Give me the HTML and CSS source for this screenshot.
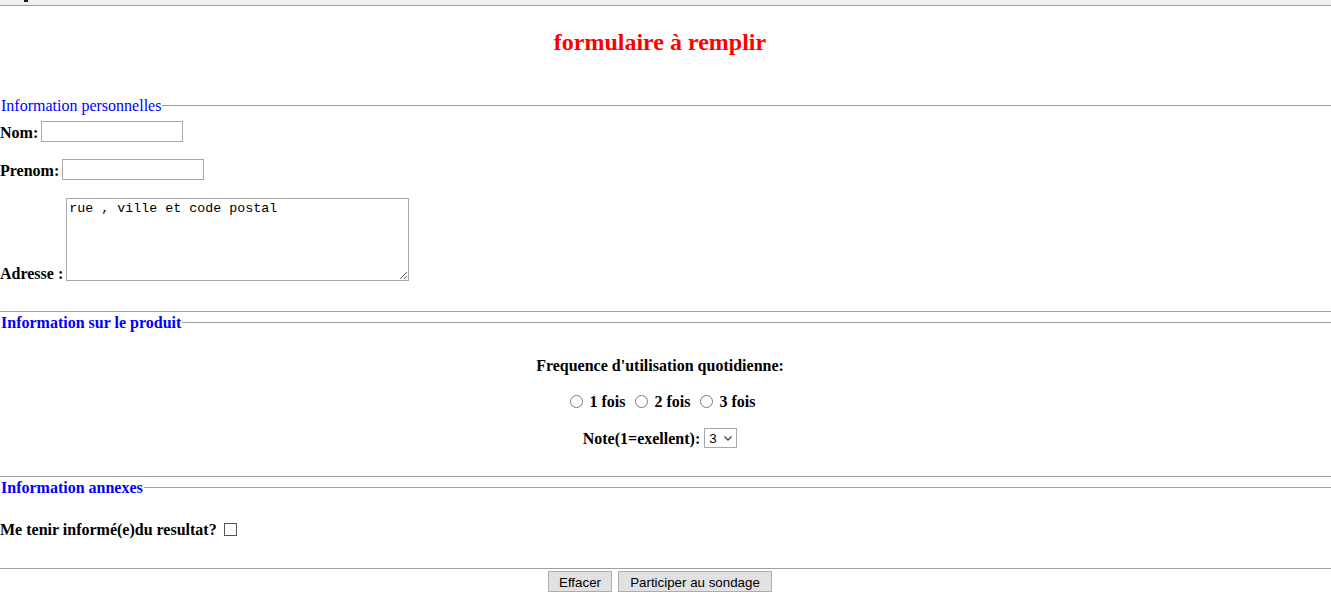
FILE: index.html
```html
<!DOCTYPE html>
<html lang="fr">
<head>
<meta charset="utf-8">
<title>formulaire</title>
<link rel="stylesheet" href="styles.css">
</head>
<body>
<div class="topbar"><span class="mark"></span></div>
<h2 class="title">formulaire à remplir</h2>
<form class="form">
  <fieldset class="sec sec1">
    <legend class="leg">Information personnelles</legend>
    <div class="row r-nom">
      <label class="lbl" for="nom">Nom:</label>
      <input class="txt" type="text" id="nom">
    </div>
    <div class="row r-prenom">
      <label class="lbl" for="prenom">Prenom:</label>
      <input class="txt" type="text" id="prenom">
    </div>
    <div class="row r-adr">
      <label class="lbl lbl-adr" for="adr">Adresse :</label>
      <textarea class="area" id="adr">rue , ville et code postal</textarea>
    </div>
  </fieldset>

  <fieldset class="sec sec2">
    <legend class="leg leg-b">Information sur le produit</legend>
    <div class="line ctr freq">Frequence d'utilisation quotidienne:</div>
    <div class="line ctr radios">
      <input class="radio" type="radio" name="f" id="f1"><label class="rlbl" for="f1">1 fois</label>
      <input class="radio" type="radio" name="f" id="f2"><label class="rlbl" for="f2">2 fois</label>
      <input class="radio" type="radio" name="f" id="f3"><label class="rlbl last" for="f3">3 fois</label>
    </div>
    <div class="line ctr note">
      <label class="lbl" for="note">Note(1=exellent):</label>
      <span class="selwrap">
        <select class="sel" id="note">
          <option>1</option><option>2</option><option selected>3</option><option>4</option><option>5</option>
        </select>
        <svg class="chev" width="8" height="5" viewBox="0 0 8 5"><path d="M0.5 0.5 L4 4 L7.5 0.5" fill="none" stroke="#444" stroke-width="1.3"/></svg>
      </span>
    </div>
  </fieldset>

  <fieldset class="sec sec3">
    <legend class="leg leg-b">Information annexes</legend>
    <div class="line chkrow">
      <label class="lbl" for="inf">Me tenir informé(e)du resultat?</label>
      <input class="chk" type="checkbox" id="inf">
    </div>
  </fieldset>

  <div class="ctr buttons">
    <button class="btn btn-reset" type="reset">Effacer</button>
    <button class="btn btn-submit" type="submit">Participer au sondage</button>
  </div>
</form>
</body>
</html>
```

FILE: styles.css
```css
* { box-sizing: border-box; }

body {
  margin: 0;
  font-family: "Liberation Serif", "Times New Roman", serif;
  font-size: 16px;
  color: #000;
  background: #fff;
}

.topbar {
  height: 6px;
  background: #f0f0f0;
  border-bottom: 1px solid #a0a0a0;
}
.topbar .mark {
  display: block;
  width: 4px;
  height: 2px;
  margin-left: 24px;
  background: #1a1a1a;
}

.title {
  margin: 22px 0 0;
  padding-right: 11px;
  font-size: 24px;
  line-height: 28px;
  font-weight: bold;
  color: #f00;
  text-align: center;
}

.form { margin: 0; }

.sec {
  margin: 0;
  padding: 0;
  min-width: 0;
  border: 0;
  border-top: 1px solid #a0a0a0;
  border-bottom: 1px solid #a0a0a0;
}
.sec1 { margin-top: 40px; padding-bottom: 30px; }
.sec2 { margin-top: 1px; padding-bottom: 28px; }
.sec3 { margin-top: 1px; padding-bottom: 29px; }

.leg {
  padding: 2px 1px 0;
  margin: 0;
  line-height: 16px;
  color: #00f;
}
.leg-b { font-weight: bold; }

.lbl {
  font-weight: bold;
  line-height: 18px;
  padding-top: 2px;
  white-space: nowrap;
}
.lbl-adr { margin-bottom: -2px; }

.row {
  display: flex;
  align-items: center;
  gap: 3px;
}
.r-nom { margin-top: 7px; }
.r-prenom { margin-top: 17px; }
.r-adr { margin-top: 18px; align-items: flex-end; }

.txt {
  width: 142px;
  height: 21px;
  margin: 0;
  padding: 1px 2px;
  border: 1px solid #a9a9a9;
  font-family: "Liberation Sans", Arial, sans-serif;
  font-size: 13px;
  background: #fff;
}

.area {
  width: 343px;
  height: 83px;
  margin: 0;
  padding: 2px;
  border: 1px solid #a9a9a9;
  font-family: "Liberation Mono", "Courier New", monospace;
  font-size: 13.33px;
  line-height: 16px;
  color: #000;
  background: #fff;
  resize: both;
}

.line {
  height: 20px;
  line-height: 20px;
}
.ctr {
  display: flex;
  justify-content: center;
  align-items: center;
  padding-right: 11px;
}
.freq { margin-top: 24px; padding-top: 1px; align-items: flex-start; font-weight: bold; }
.radios { margin-top: 16px; }
.note { margin-top: 17px; gap: 4px; }

.radio {
  appearance: none;
  -webkit-appearance: none;
  width: 13px;
  height: 13px;
  margin: 0 7px 0 5px;
  border: 1px solid #7a7a7a;
  border-radius: 50%;
  background: #fff;
  flex: none;
}
.rlbl {
  font-weight: bold;
  margin-right: 4px;
  line-height: 18px;
  padding-top: 2px;
  white-space: nowrap;
}
.rlbl.last { margin-right: 0; }

.selwrap {
  position: relative;
  display: block;
  width: 33px;
  height: 20px;
}
.sel {
  appearance: none;
  -webkit-appearance: none;
  display: block;
  width: 33px;
  height: 20px;
  margin: 0;
  padding: 0 0 0 4px;
  border: 1px solid #a9a9a9;
  border-radius: 0;
  background: #fff;
  font-family: "Liberation Sans", Arial, sans-serif;
  font-size: 13.33px;
  color: #000;
}
.chev {
  position: absolute;
  right: 5px;
  top: 8px;
  pointer-events: none;
}

.chkrow {
  display: flex;
  align-items: center;
  margin-top: 23px;
}
.chk {
  appearance: none;
  -webkit-appearance: none;
  width: 13px;
  height: 13px;
  margin: 0 0 0 7px;
  border: 1px solid #555;
  background: #fff;
  flex: none;
}

.buttons {
  margin-top: 2px;
  gap: 6px;
}
.btn {
  height: 21px;
  margin: 0;
  padding: 1px 0 0;
  border: 1px solid #adadad;
  background: #e1e1e1;
  font-family: "Liberation Sans", Arial, sans-serif;
  font-size: 13.33px;
  color: #000;
  text-align: center;
}
.btn-reset { width: 64px; }
.btn-submit { width: 154px; }
```
